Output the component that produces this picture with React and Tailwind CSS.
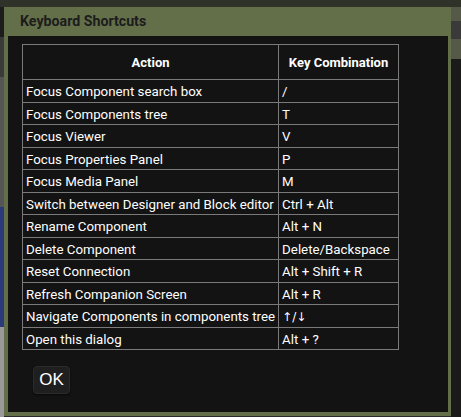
import React from "react";

const rows = [
  ["Focus Component search box", "/"],
  ["Focus Components tree", "T"],
  ["Focus Viewer", "V"],
  ["Focus Properties Panel", "P"],
  ["Focus Media Panel", "M"],
  ["Switch between Designer and Block editor", "Ctrl + Alt"],
  ["Rename Component", "Alt + N"],
  ["Delete Component", "Delete/Backspace"],
  ["Reset Connection", "Alt + Shift + R"],
  ["Refresh Companion Screen", "Alt + R"],
  ["Navigate Components in components tree", "\u2191/\u2193"],
  ["Open this dialog", "Alt + ?"],
];

export default function App() {
  return (
    <div
      className="relative w-[461px] h-[417px] overflow-hidden bg-[#2a2a2a]"
      style={{ fontFamily: "Roboto, 'Liberation Sans', sans-serif" }}
    >
      {/* background app hints */}
      <div className="flex flex-col w-full h-full">
        <div className="h-[7px] bg-[#2e3228]" />
        <div className="flex flex-1">
          <div className="w-[4px] flex flex-col">
            <div className="h-[30px] bg-[#1c1c1c]" />
            <div className="h-[40px] bg-[#3a3a3a]" />
            <div className="h-[130px] bg-[#555]" />
            <div className="h-[120px] bg-[#2b3a7a]" />
            <div className="flex-1 bg-[#9a9a9a]" />
          </div>
          <div className="flex-1" />
          <div className="w-[10px] flex flex-col bg-[#1e1e1e]">
            <div className="h-[14px] bg-[#555a48]" />
            <div className="h-[18px] bg-[#3a3a3a]" />
            <div className="h-[20px] bg-[#555a48]" />
            <div className="flex-1 bg-[#1a1a1a]" />
          </div>
        </div>
      </div>

      {/* dialog */}
      <div className="absolute left-[4px] top-[7px] w-[447px] h-[409px] bg-[#636f49] flex flex-col">
        <div className="h-[29px] flex items-center pl-[16px] pt-[1px]">
          <span className="text-[14.2px] font-bold text-[#1c1c1c]">Keyboard Shortcuts</span>
        </div>
        <div className="flex-1 ml-[4px] mr-[3px] mb-[4px] bg-[#131313] flex flex-col pl-[14px] pt-[8px]">
          <table className="border-collapse text-white text-[13.3px] w-[377px]">
            <thead>
              <tr className="h-[35px]">
                <th className="border border-[#7a7a7a] w-[256px] font-bold text-[13px] text-center pt-[2px]">Action</th>
                <th className="border border-[#7a7a7a] font-bold text-[13px] text-center pt-[2px]">Key Combination</th>
              </tr>
            </thead>
            <tbody>
              {rows.map(([a, k]) => (
                <tr key={a} className="h-[22.5px]">
                  <td className="border border-[#7a7a7a] px-[3px] leading-[15px] pt-[2px] pb-0 whitespace-nowrap">{a}</td>
                  <td className="border border-[#7a7a7a] px-[3px] leading-[15px] pt-[2px] pb-0 whitespace-nowrap">
                    {k === "\u2191/\u2193" ? (
                      <span style={{ fontFamily: "'DejaVu Sans', sans-serif" }} className="text-[12px]">{k}</span>
                    ) : (
                      k
                    )}
                  </td>
                </tr>
              ))}
            </tbody>
          </table>
          <div className="mt-[16px] ml-[11px]">
            <button
              className="w-[37px] h-[28px] rounded-[4px] bg-[#1f1f1f] border border-[#2c2c2c] shadow-[0_1px_2px_rgba(0,0,0,0.6)] text-white text-[17px] flex items-center justify-center"
              style={{ fontFamily: "'Liberation Sans', Arial, sans-serif" }}
            >
              OK
            </button>
          </div>
        </div>
      </div>
    </div>
  );
}
